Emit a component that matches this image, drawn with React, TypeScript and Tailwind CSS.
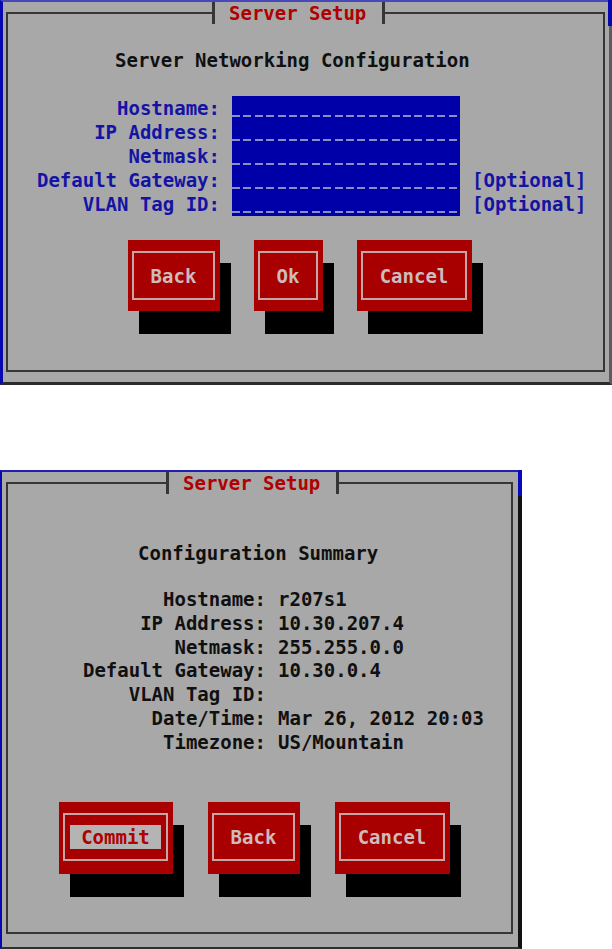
import React from "react";

function Btn({
  label,
  w,
  h,
  pb,
  highlight,
}: {
  label: string;
  w: string;
  h: string;
  pb: string;
  highlight?: boolean;
}) {
  return (
    <div className={`bg-[#a80000] shadow-[11px_23px_0_0_#000] pl-[4px] pr-[5px] pt-[11px] ${w} ${h} ${pb}`}>
      <div className="h-full border-2 border-[#c4a6a6] flex items-center justify-center">
        {highlight ? (
          <span className="bg-[#b4b4b4] text-[#b00000] px-[11px] leading-[24px]">{label}</span>
        ) : (
          <span className="text-[#cdbcbc] leading-[24px]">{label}</span>
        )}
      </div>
    </div>
  );
}

function Title({ left }: { left: string }) {
  return (
    <div
      className={`absolute top-[-12px] h-[22px] bg-[#a8a8a8] border-l-[3px] border-r-[3px] border-[#363636] pl-[14px] pr-[16px] flex items-center text-[#b00000] ${left}`}
    >
      Server Setup
    </div>
  );
}

export default function App() {
  const fieldRows = [
    { label: "Hostname:", opt: false },
    { label: "IP Address:", opt: false },
    { label: "Netmask:", opt: false },
    { label: "Default Gateway:", opt: true },
    { label: "VLAN Tag ID:", opt: true },
  ];
  const summary: [string, string][] = [
    ["Hostname:", "r207s1"],
    ["IP Address:", "10.30.207.4"],
    ["Netmask:", "255.255.0.0"],
    ["Default Gateway:", "10.30.0.4"],
    ["VLAN Tag ID:", ""],
    ["Date/Time:", "Mar 26, 2012 20:03"],
    ["Timezone:", "US/Mountain"],
  ];
  return (
    <div className="w-[612px] h-[949px] bg-white font-['DejaVu_Sans_Mono',monospace] font-bold text-[19px] leading-[24px] whitespace-pre">
      {/* Top screenshot */}
      <div className="relative w-[612px] h-[385px] bg-[#a8a8a8] border-l-[3px] border-l-[#0808b0] border-t-[2px] border-t-[#4848b8] border-b-[3px] border-b-[#2c2c2c] border-r-[3px] border-r-[#5c5c5c]">
        <div className="absolute right-[-3px] top-[-2px] w-[4px] h-[26px] bg-[#0808b0]" />
        <div className="relative ml-[3px] mt-[10px] w-[599px] h-[360px] border-2 border-[#363636]">
          <Title left="left-[204px]" />
          <div className="pt-[34px] pl-[107px] text-[#101010]">Server Networking Configuration</div>
          <div className="mt-[24px] flex flex-col">
            {fieldRows.map((r) => (
              <div key={r.label} className="flex h-[24px]">
                <div className="w-[212px] text-right text-[#1414a4]">{r.label}</div>
                <div className="ml-[12px] w-[228px] h-[24px] bg-[#0000a8] flex flex-col justify-end pb-[3px]">
                  <div className="h-[2px] w-full bg-[repeating-linear-gradient(90deg,#8c8cc8_0px,#8c8cc8_8px,transparent_8px,transparent_11.4px)]" />
                </div>
                {r.opt && <div className="ml-[12px] text-[#1414a4]">[Optional]</div>}
              </div>
            ))}
          </div>
          <div className="mt-[24px] pl-[120px] flex gap-[34px]">
            <Btn label="Back" w="w-[92px]" h="h-[71px]" pb="pb-[11px]" />
            <Btn label="Ok" w="w-[69px]" h="h-[71px]" pb="pb-[11px]" />
            <Btn label="Cancel" w="w-[115px]" h="h-[71px]" pb="pb-[11px]" />
          </div>
        </div>
      </div>

      <div className="h-[85px]" />

      {/* Bottom screenshot */}
      <div className="relative w-[522px] h-[479px] bg-[#a8a8a8] border-l-[2px] border-l-[#0808b0] border-t-[2px] border-t-[#2020b0] border-b-[2px] border-b-[#303030] border-r-[4px] border-r-[#111]">
        <div className="absolute right-[-4px] top-[-2px] w-[4px] h-[26px] bg-[#0808c0]" />
        <div className="relative ml-[4px] mt-[10px] w-[507px] h-[452px] border-2 border-[#363636]">
          <Title left="left-[158px]" />
          <div className="pt-[57px] pl-[130px] text-[#101010]">Configuration Summary</div>
          <div className="mt-[23px] flex flex-col text-[#101010]">
            {summary.map(([k, v]) => (
              <div key={k} className="flex h-[23.8px] leading-[23.8px]">
                <div className="w-[258px] text-right">{k}</div>
                <div className="ml-[12px]">{v}</div>
              </div>
            ))}
          </div>
          <div className="mt-[47px] pl-[51px] flex gap-[35px]">
            <Btn label="Commit" w="w-[114px]" h="h-[72px]" pb="pb-[13px]" highlight />
            <Btn label="Back" w="w-[92px]" h="h-[72px]" pb="pb-[13px]" />
            <Btn label="Cancel" w="w-[115px]" h="h-[72px]" pb="pb-[13px]" />
          </div>
        </div>
      </div>
    </div>
  );
}
